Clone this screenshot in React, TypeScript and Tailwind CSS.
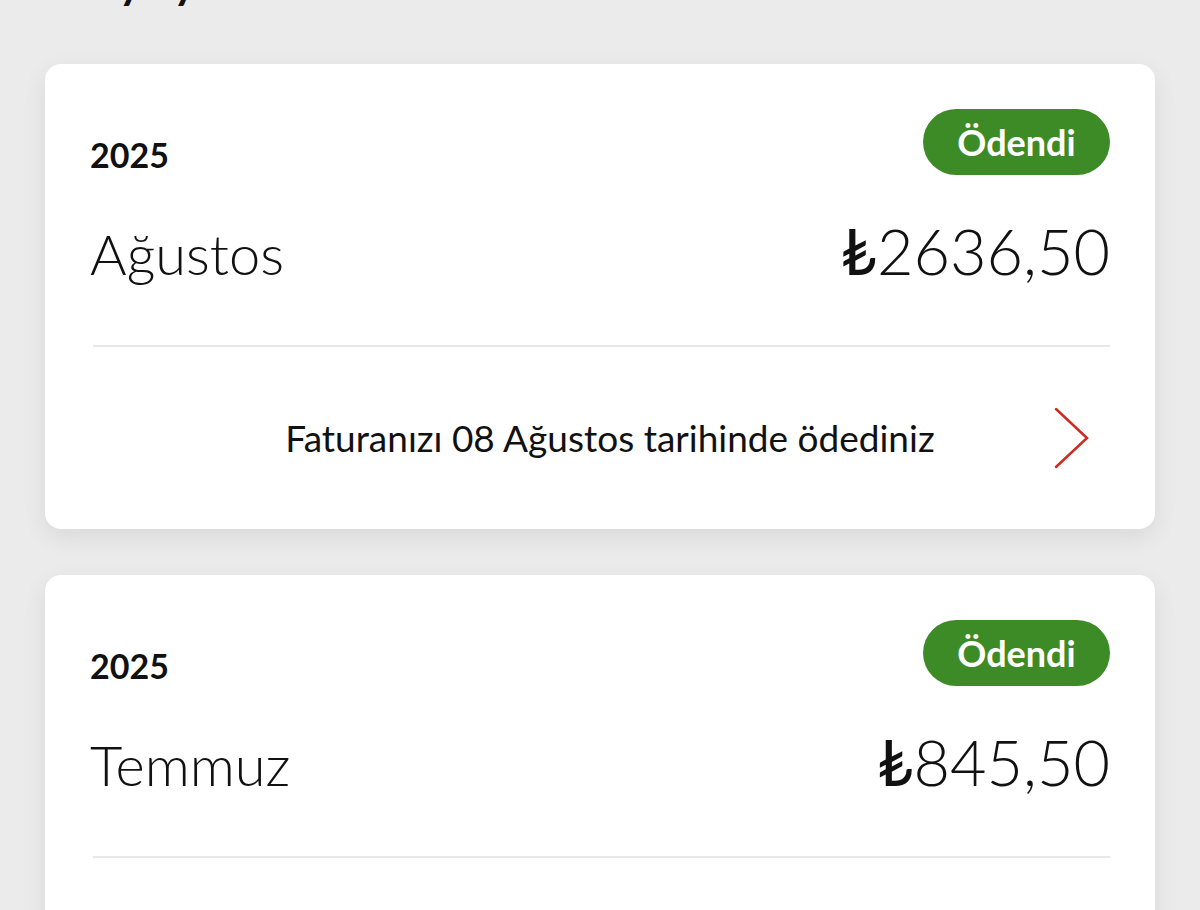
import React from "react";

interface IBill {
    year: string;
    month: string;
    amount: string;
    note: string;
}

const bills: IBill[] = [
    { year: "2025", month: "Ağustos", amount: "2636,50", note: "Faturanızı 08 Ağustos tarihinde ödediniz" },
    { year: "2025", month: "Temmuz", amount: "845,50", note: "Faturanızı 08 Temmuz tarihinde ödediniz" },
];

function Chevron() {
    return (
        <svg width="36" height="62" viewBox="0 0 36 62" fill="none" className="shrink-0">
            <path d="M2 2 L33 31 L2 60" stroke="#cf2a1f" strokeWidth="2.5" strokeLinecap="round" strokeLinejoin="miter" />
        </svg>
    );
}

function BillCard({ bill }: { bill: IBill }) {
    return (
        <div className="rounded-2xl bg-white shadow-[0_8px_24px_rgba(0,0,0,0.08)]">
            <div className="px-[45px] pt-[45px]">
                <div className="flex items-end justify-between">
                    <span className="text-[34px] font-bold leading-[40px] text-[#111]">{bill.year}</span>
                    <span className="flex h-[66px] w-[187px] items-center justify-center rounded-full bg-[#3d8b26] text-[36px] font-bold text-white">
                        Ödendi
                    </span>
                </div>
                <div className="mt-[40px] flex items-baseline justify-between font-light leading-[72px] text-[#111]">
                    <span className="text-[56px]">{bill.month}</span>
                    <span className="text-[63px]">
                        <span className="font-normal">₺</span>
                        {bill.amount}
                    </span>
                </div>
            </div>
            {/* divider */}
            <div className="mr-[45px] ml-[48px] mt-[55px] h-[2px] bg-[#e8e8e8]" />
            <div className="flex h-[182px] items-center pl-[121px] pr-[65px]">
                <p className="flex-1 text-center text-[37px] text-[#111]">{bill.note}</p>
                <Chevron />
            </div>
        </div>
    );
}

export default function App() {
    return (
        <div className="min-h-[910px] overflow-hidden bg-[#ebebeb] px-[45px] pb-10 font-['Lato','Open_Sans',sans-serif]">
            <h1 className="ml-[45px] mt-[-40px] text-[44px] font-bold leading-[44px] text-[#111]">
                Ay ay faturalarınız
            </h1>
            <div className="mt-[60px] flex flex-col gap-[46px]">
                {bills.map((b) => (
                    <BillCard key={b.month} bill={b} />
                ))}
            </div>
        </div>
    );
}
